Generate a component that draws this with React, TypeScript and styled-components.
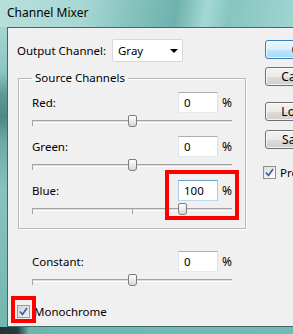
import React from "react";
import styled, { createGlobalStyle } from "styled-components";

const GlobalStyle = createGlobalStyle`
  html, body {
    margin: 0;
    padding: 0;
    background: #ffffff;
  }
  body {
    font-family: "Noto Sans", "Liberation Sans", sans-serif;
  }
`;

const Window = styled.div`
  position: relative;
  width: 293px;
  height: 334px;
  overflow: hidden;
  display: grid;
  grid-template-columns: 7px 1fr;
  grid-template-rows: 27px 1fr 7px;
  background: #7cbdb8;
  font-family: "Noto Sans", "Liberation Sans", sans-serif;
  font-size: 11.5px;
  color: #000;
`;

const TitleBar = styled.div`
  grid-column: 1 / 3;
  display: flex;
  align-items: center;
  padding: 0 0 2px 7px;
  font-size: 12px;
  background: linear-gradient(
    100deg,
    #b7dfdb 0%,
    #a9d8d4 28%,
    #84c2bd 45%,
    #6fb2ad 60%,
    #a5d8d4 70%,
    #86c5c0 78%,
    #a0d4d0 100%
  );
`;

const LeftFrame = styled.div`
  background: linear-gradient(
    180deg,
    #a6d5d1 0%,
    #8cc6c1 15%,
    #5f9a97 22%,
    #4c8986 30%,
    #6ea9a5 38%,
    #86c3be 55%,
    #75b6b1 100%
  );
`;

const BottomFrame = styled.div`
  grid-column: 1 / 3;
  background: linear-gradient(90deg, #1d3535 0%, #22403f 6%, #6db6b0 10%, #74bab4 100%);
`;

const Client = styled.div`
  display: flex;
  background: #f0f0f0;
  border-top: 1px solid #3e6a68;
  border-left: 1px solid #3e6a68;
  border-bottom: 1px solid #3e6a68;
  overflow: hidden;
`;

const MainColumn = styled.div`
  flex: 0 0 255px;
  display: flex;
  flex-direction: column;
  padding: 11px 0 0 9px;
  box-sizing: border-box;
`;

const OutputRow = styled.div`
  display: flex;
  align-items: center;
  height: 23px;
`;

const OutputLabel = styled.span`
  width: 95px;
`;

const Select = styled.div`
  width: 71px;
  height: 23px;
  box-sizing: border-box;
  display: flex;
  align-items: center;
  padding: 0 4px 0 5px;
  background: #ffffff;
  border: 1px solid #d8d8d8;
  border-radius: 2px;
`;

const Arrow = styled.span`
  margin-left: auto;
  width: 0;
  height: 0;
  border-left: 4px solid transparent;
  border-right: 4px solid transparent;
  border-top: 4px solid #000;
`;

const GroupBox = styled.fieldset`
  margin: 8px 0 0 1px;
  padding: 6px 0 4px 13px;
  width: 228px;
  min-width: 0;
  box-sizing: border-box;
  border: 1px solid #b8b8b8;
  box-shadow: 1px 1px 0 #ffffff, inset 1px 1px 0 #ffffff;
`;

const Legend = styled.legend`
  padding: 0 3px;
  line-height: 16px;
`;

const ChannelBlock = styled.div`
  display: flex;
  flex-direction: column;
  height: 44px;
`;

const FieldLine = styled.div`
  display: flex;
  align-items: center;
  height: 21px;
`;

const FieldLabel = styled.span`
  width: 146px;
`;

const NumberBox = styled.div<{ $focused?: boolean }>`
  width: 40px;
  height: 21px;
  box-sizing: border-box;
  display: flex;
  align-items: center;
  padding-left: 5px;
  background: #ffffff;
  border: 1px solid;
  border-color: ${(p) =>
    p.$focused ? "#6b9ccb #a9cbe9 #b9d6ee #a9cbe9" : "#abadb3 #dbdfe6 #e3e9ef #e2e3ea"};
`;

const Percent = styled.span`
  margin-left: 4px;
  font-size: 12px;
`;

const Slider = styled.div`
  position: relative;
  width: 201px;
  height: 23px;
`;

const Track = styled.div`
  position: absolute;
  left: 0;
  top: 7px;
  width: 200px;
  height: 3px;
  box-sizing: border-box;
  border-top: 1px solid #a3a3a3;
  border-bottom: 1px solid #ffffff;
  background: #dcdcdc;
`;

const Tick = styled.div<{ $x: number }>`
  position: absolute;
  left: ${(p) => p.$x}px;
  top: 8px;
  width: 1px;
  height: 5px;
  background: #a3a3a3;
`;

const Thumb = styled.div`
  position: absolute;
  top: 2px;
  width: 9px;
  height: 12px;
  box-sizing: border-box;
  border: 1px solid #7d7d7d;
  border-radius: 2px 2px 3px 3px;
  background: linear-gradient(180deg, #fdfdfd 0%, #ececec 50%, #d6d6d6 100%);
`;

const ConstantBlock = styled.div`
  margin-top: 22px;
  padding-left: 15px;
`;

const CheckRow = styled.div`
  display: flex;
  align-items: center;
  gap: 4px;
`;

const MonoRow = styled(CheckRow)`
  margin-top: 9px;
`;

const CheckBox = styled.div<{ $dim?: boolean }>`
  flex: 0 0 13px;
  width: 13px;
  height: 13px;
  box-sizing: border-box;
  border: 1px solid ${(p) => (p.$dim ? "#9a9a9a" : "#8e8f8f")};
  background: ${(p) =>
    p.$dim
      ? "linear-gradient(135deg, #d4d4d4 0%, #e6e6e6 60%, #f0f0f0 100%)"
      : "linear-gradient(135deg, #dcdcdc 0%, #f2f2f2 60%, #ffffff 100%)"};
  display: flex;
  align-items: center;
  justify-content: center;
`;

const ButtonColumn = styled.div`
  display: flex;
  flex-direction: column;
  padding-top: 12px;
  flex: 0 0 auto;
`;

const Button = styled.div<{ $primary?: boolean; $gap: number }>`
  margin: ${(p) => p.$gap}px 0 0 2px;
  width: 70px;
  height: 19px;
  box-sizing: border-box;
  display: flex;
  align-items: center;
  justify-content: center;
  font-size: 12px;
  border: 1px solid ${(p) => (p.$primary ? "#3c7fb1" : "#707070")};
  border-radius: 3px;
  background: ${(p) =>
    p.$primary
      ? "linear-gradient(180deg, #eaf6fd 0%, #d9f0fc 50%, #bee6fd 51%, #a7d9f5 100%)"
      : "linear-gradient(180deg, #f2f2f2 0%, #ebebeb 50%, #dddddd 51%, #cfcfcf 100%)"};
  box-shadow: inset 0 0 0 1px rgba(255, 255, 255, 0.7);
`;

const PreviewRow = styled(CheckRow)`
  margin-top: 16px;
`;

const Highlight = styled.div<{ $x: number; $y: number; $w: number; $h: number }>`
  position: absolute;
  left: ${(p) => p.$x}px;
  top: ${(p) => p.$y}px;
  width: ${(p) => p.$w}px;
  height: ${(p) => p.$h}px;
  box-sizing: border-box;
  border: 4px solid #ff0000;
  pointer-events: none;
`;

const Check = () => (
  <svg width="9" height="9" viewBox="0 0 9 9">
    <path d="M1 4.5 L3.5 7.5 L8 1" fill="none" stroke="#3f57a6" strokeWidth="1.6" />
  </svg>
);

const channels = [
  { name: "Red", value: 0 },
  { name: "Green", value: 0 },
  { name: "Blue", value: 100, focused: true },
];

const SliderControl = ({ value }: { value: number }) => (
  <Slider>
    <Track />
    <Tick $x={0} />
    <Tick $x={100} />
    <Thumb style={{ left: 100 + value / 2 - 4 }} />
  </Slider>
);

const Field = ({ label, value, focused }: { label: string; value: number; focused?: boolean }) => (
  <ChannelBlock>
    <FieldLine>
      <FieldLabel>{label}:</FieldLabel>
      <NumberBox $focused={focused}>{value}</NumberBox>
      <Percent>%</Percent>
    </FieldLine>
    <SliderControl value={value} />
  </ChannelBlock>
);

export default function App() {
  return (
    <>
      <GlobalStyle />
      <Window>
        <TitleBar>Channel Mixer</TitleBar>
        <LeftFrame />
        <Client>
          <MainColumn>
            <OutputRow>
              <OutputLabel>Output Channel:</OutputLabel>
              <Select>
                Gray
                <Arrow />
              </Select>
            </OutputRow>
            <GroupBox>
              <Legend>Source Channels</Legend>
              {channels.map((c) => (
                <Field key={c.name} label={c.name} value={c.value} focused={c.focused} />
              ))}
            </GroupBox>
            <ConstantBlock>
              <Field label="Constant" value={0} />
            </ConstantBlock>
            <MonoRow>
              <CheckBox $dim>
                <Check />
              </CheckBox>
              Monochrome
            </MonoRow>
          </MainColumn>
          <ButtonColumn>
            <Button $primary $gap={0}>OK</Button>
            <Button $gap={8}>Cancel</Button>
            <Button $gap={16}>Load...</Button>
            <Button $gap={9}>Save...</Button>
            <PreviewRow>
              <CheckBox>
                <Check />
              </CheckBox>
              Preview
            </PreviewRow>
          </ButtonColumn>
        </Client>
        <BottomFrame />
        <Highlight $x={165} $y={170} $w={74} $h={50} />
        <Highlight $x={11} $y={296} $w={25} $h={27} />
      </Window>
    </>
  );
}
